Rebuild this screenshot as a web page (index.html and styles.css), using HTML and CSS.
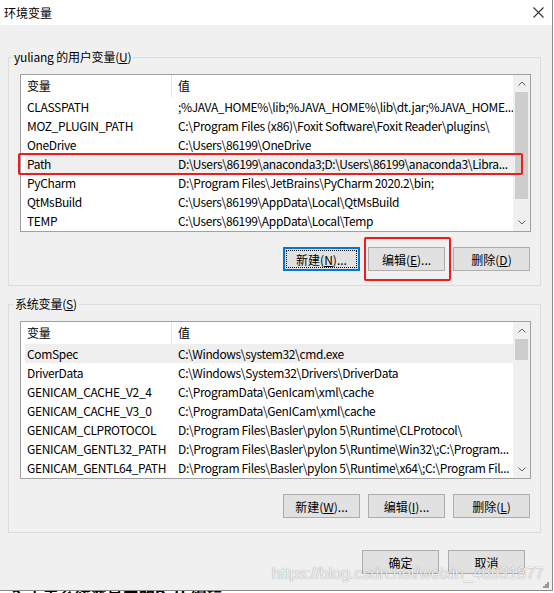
FILE: index.html
```html
<!DOCTYPE html>
<html lang="zh-CN">
<head>
    <meta charset="UTF-8">
    <title>环境变量</title>
    <link rel="stylesheet" href="styles.css">
</head>
<body>
    <div class="window">
        <div class="titlebar">
            <span class="title">环境变量</span>
            <svg class="close" width="11" height="11" viewBox="0 0 11 11"><path d="M0.5 0.5L10.5 10.5M10.5 0.5L0.5 10.5" stroke="#333" stroke-width="1.1" fill="none"/></svg>
        </div>
        <div class="content">
            <fieldset class="group">
                <legend>yuliang 的用户变量(<u>U</u>)</legend>
                <div class="list">
                    <div class="list-main">
                        <div class="row head"><span class="name">变量</span><span class="value">值</span></div>
                        <div class="row"><span class="name">CLASSPATH</span><span class="value">;%JAVA_HOME%\lib;%JAVA_HOME%\lib\dt.jar;%JAVA_HOME...</span></div>
                        <div class="row"><span class="name">MOZ_PLUGIN_PATH</span><span class="value">C:\Program Files (x86)\Foxit Software\Foxit Reader\plugins\</span></div>
                        <div class="row"><span class="name">OneDrive</span><span class="value">C:\Users\86199\OneDrive</span></div>
                        <div class="row sel"><span class="name">Path</span><span class="value">D:\Users\86199\anaconda3;D:\Users\86199\anaconda3\Libra...</span><i class="mark mark-row"></i></div>
                        <div class="row"><span class="name">PyCharm</span><span class="value">D:\Program Files\JetBrains\PyCharm 2020.2\bin;</span></div>
                        <div class="row"><span class="name">QtMsBuild</span><span class="value">C:\Users\86199\AppData\Local\QtMsBuild</span></div>
                        <div class="row"><span class="name">TEMP</span><span class="value">C:\Users\86199\AppData\Local\Temp</span></div>
                    </div>
                    <div class="scrollbar">
                        <div class="arrow"><svg width="8" height="5" viewBox="0 0 8 5"><path d="M0.5 4.5L4 1L7.5 4.5" stroke="#606060" fill="none"/></svg></div>
                        <div class="track"><div class="thumb thumb-user"></div></div>
                        <div class="arrow"><svg width="8" height="5" viewBox="0 0 8 5"><path d="M0.5 0.5L4 4L7.5 0.5" stroke="#606060" fill="none"/></svg></div>
                    </div>
                </div>
                <div class="buttons">
                    <button class="focused">新建(<u>N</u>)...</button>
                    <div class="marked"><button>编辑(<u>E</u>)...</button><i class="mark mark-btn"></i></div>
                    <button>删除(<u>D</u>)</button>
                </div>
            </fieldset>

            <fieldset class="group group-sys">
                <legend>系统变量(<u>S</u>)</legend>
                <div class="list">
                    <div class="list-main">
                        <div class="row head"><span class="name">变量</span><span class="value">值</span></div>
                        <div class="row sel"><span class="name">ComSpec</span><span class="value">C:\Windows\system32\cmd.exe</span></div>
                        <div class="row"><span class="name">DriverData</span><span class="value">C:\Windows\System32\Drivers\DriverData</span></div>
                        <div class="row"><span class="name">GENICAM_CACHE_V2_4</span><span class="value">C:\ProgramData\GenIcam\xml\cache</span></div>
                        <div class="row"><span class="name">GENICAM_CACHE_V3_0</span><span class="value">C:\ProgramData\GenICam\xml\cache</span></div>
                        <div class="row"><span class="name">GENICAM_CLPROTOCOL</span><span class="value">D:\Program Files\Basler\pylon 5\Runtime\CLProtocol\</span></div>
                        <div class="row"><span class="name">GENICAM_GENTL32_PATH</span><span class="value">D:\Program Files\Basler\pylon 5\Runtime\Win32\;C:\Program...</span></div>
                        <div class="row"><span class="name">GENICAM_GENTL64_PATH</span><span class="value">D:\Program Files\Basler\pylon 5\Runtime\x64\;C:\Program Fil...</span></div>
                    </div>
                    <div class="scrollbar">
                        <div class="arrow"><svg width="8" height="5" viewBox="0 0 8 5"><path d="M0.5 4.5L4 1L7.5 4.5" stroke="#606060" fill="none"/></svg></div>
                        <div class="track"><div class="thumb thumb-sys"></div></div>
                        <div class="arrow"><svg width="8" height="5" viewBox="0 0 8 5"><path d="M0.5 0.5L4 4L7.5 0.5" stroke="#606060" fill="none"/></svg></div>
                    </div>
                </div>
                <div class="buttons">
                    <button>新建(<u>W</u>)...</button>
                    <button>编辑(<u>I</u>)...</button>
                    <button>删除(<u>L</u>)</button>
                </div>
            </fieldset>

            <div class="footer">
                <button>确定</button>
                <button>取消</button>
            </div>
        </div>
        <svg class="grip" width="6" height="6" viewBox="0 0 6 6" fill="#9a9a9a"><rect x="4" y="0" width="2" height="2"/><rect x="2" y="2" width="2" height="2"/><rect x="4" y="2" width="2" height="2"/><rect x="0" y="4" width="2" height="2"/><rect x="2" y="4" width="2" height="2"/><rect x="4" y="4" width="2" height="2"/></svg>
        <div class="watermark">https://blog.csdn.net/weixin_46931877</div>
    </div>
    <div class="below"><span>2.点击系统变量中的Path编辑</span></div>
</body>
</html>
```

FILE: styles.css
```css
* {
    box-sizing: border-box;
}
body {
    margin: 0;
    width: 554px;
    height: 593px;
    overflow: hidden;
    background: #ffffff;
    font-family: "Noto Sans CJK SC", "Noto Sans", sans-serif;
    font-size: 12px;
    color: #000;
}
.window {
    position: relative;
    width: 553px;
    height: 591px;
    background: #f0f0f0;
    border-right: 1px solid #8a8a8a;
    border-bottom: 1px solid #8a8a8a;
    overflow: hidden;
}
.titlebar {
    height: 25px;
    background: #ffffff;
    display: flex;
    align-items: center;
    justify-content: space-between;
    padding: 0 8px 1px 4px;
}
.title {
    font-size: 12px;
}
.content {
    padding: 0 11px 0 8px;
}
.group {
    margin: 24px 0 0 0;
    padding: 9px 9px 14px 11px;
    border: 1px solid #dcdcdc;
    min-width: 0;
}
.group-sys {
    margin-top: 10px;
}
.group legend {
    margin-left: -8px;
    padding: 0 2px;
    line-height: 16px;
    letter-spacing: -0.2px;
}
.group-sys legend {
    margin-left: -7px;
}
.list {
    display: flex;
    height: 158px;
    background: #ffffff;
    border: 1px solid #a0a0a0;
}
.list-main {
    flex: 1;
    min-width: 0;
}
.row {
    position: relative;
    display: grid;
    grid-template-columns: 147px 1fr;
    height: 19px;
    line-height: 19px;
    margin-left: 4px;
    white-space: nowrap;
    letter-spacing: -0.35px;
}
.row span {
    overflow: hidden;
}
.row .name {
    padding-left: 2px;
}
.row .value {
    padding-left: 6px;
}
.row.head {
    height: 22px;
    line-height: 22px;
}
.row.head .name {
    border-right: 1px solid #e5e5e5;
}
.row.sel {
    background: #efefef;
}
.scrollbar {
    width: 17px;
    display: flex;
    flex-direction: column;
    background: #f0f0f0;
}
.arrow {
    height: 17px;
    display: flex;
    align-items: center;
    justify-content: center;
}
.track {
    flex: 1;
    padding: 0 2px;
}
.thumb {
    background: #cdcdcd;
}
.thumb-user {
    height: 107px;
}
.thumb-sys {
    height: 21px;
}
.buttons {
    display: flex;
    justify-content: flex-end;
    gap: 8px;
    margin-top: 15px;
    padding-right: 1px;
}
button {
    width: 77px;
    height: 24px;
    padding: 0;
    background: #e1e1e1;
    border: 1px solid #adadad;
    font-family: inherit;
    font-size: 12px;
    color: #000;
}
button.focused {
    border-color: #0078d7;
    box-shadow: inset 0 0 0 1px #0078d7;
    outline: 1px dotted #000;
    outline-offset: -4px;
}
.marked {
    position: relative;
    display: flex;
}
.mark {
    position: absolute;
    border: 2px solid #ee1c1c;
    border-radius: 2px;
}
.mark-row {
    left: -7px;
    right: -10px;
    top: -1px;
    bottom: -2px;
}
.mark-btn {
    left: -4px;
    right: -6px;
    top: -10px;
    bottom: -10px;
}
.footer {
    display: flex;
    justify-content: flex-end;
    gap: 9px;
    margin-top: 17px;
    padding-right: 16px;
}
.grip {
    position: absolute;
    right: 3px;
    bottom: 2px;
}
.watermark {
    position: absolute;
    right: 8px;
    bottom: 7px;
    font-family: "Liberation Sans", Arial, sans-serif;
    font-size: 16px;
    color: rgba(255, 255, 255, 0.9);
    text-shadow: 0 0 1px rgba(0, 0, 0, 0.5);
}
.below {
    height: 2px;
    overflow: hidden;
    padding-left: 12px;
}
.below span {
    display: block;
    margin-top: -4px;
    font-weight: bold;
    font-size: 16px;
    line-height: 16px;
}
```
